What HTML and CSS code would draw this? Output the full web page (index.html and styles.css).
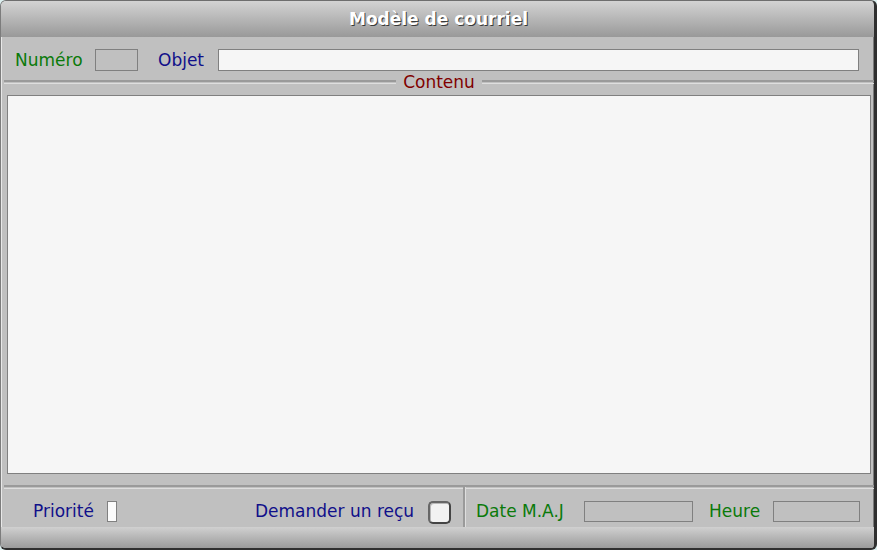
FILE: index.html
```html
<!DOCTYPE html>
<html lang="fr">
<head>
<meta charset="utf-8">
<title>Modèle de courriel</title>
<link rel="stylesheet" href="styles.css">
</head>
<body>
<div class="window">
  <div class="titlebar">Modèle de courriel</div>
  <div class="row-top">
    <span class="label green lbl-numero">Numéro</span>
    <span class="field field-numero"></span>
    <span class="label blue lbl-objet">Objet</span>
    <span class="field field-objet"></span>
  </div>
  <div class="separator">
    <span class="groove"></span>
    <span class="sep-label">Contenu</span>
    <span class="groove"></span>
  </div>
  <div class="content"></div>
  <div class="hgroove"></div>
  <div class="row-bottom">
    <div class="bottom-left">
      <span class="label blue lbl-priorite">Priorité</span>
      <span class="field field-priorite"></span>
      <span class="label blue lbl-recu">Demander un reçu</span>
      <span class="checkbox"></span>
    </div>
    <div class="vdivider"></div>
    <div class="bottom-right">
      <span class="label green lbl-date">Date M.A.J</span>
      <span class="field field-date"></span>
      <span class="label green lbl-heure">Heure</span>
      <span class="field field-heure"></span>
    </div>
  </div>
  <div class="footer"></div>
</div>
</body>
</html>
```
FILE: styles.css
```css
html, body {
  margin: 0;
  padding: 0;
  background: #dcefef;
}
body {
  font-family: "DejaVu Sans", Verdana, sans-serif;
  font-size: 17px;
}
.window {
  width: 877px;
  height: 550px;
  box-sizing: border-box;
  border-style: solid;
  border-color: #6e6e6e #2f2f2f #2f2f2f #7c7c7c;
  border-width: 1px 3px 2px 1px;
  border-radius: 6px;
  background: #c0c0c0;
  overflow: hidden;
  display: flex;
  flex-direction: column;
  box-shadow: inset 1px 0 0 #e8e8e8, inset -1px 0 0 #7a7a7a;
}
.titlebar {
  height: 36px;
  flex: none;
  background: linear-gradient(#d3d3d3, #999999);
  color: #ffffff;
  font-weight: bold;
  font-size: 17px;
  line-height: 36px;
  text-align: center;
  padding-left: 2px;
  text-shadow: 1px 1px 0 #3a3a3a;
}
.label {
  display: block;
  flex: none;
  white-space: nowrap;
}
.green { color: #0a7a0a; }
.blue { color: #10108a; }
.field {
  display: block;
  flex: none;
  box-sizing: border-box;
  border: 1px solid #808080;
}
.row-top {
  height: 38px;
  flex: none;
  display: flex;
  align-items: flex-start;
  padding: 12px 0 0 14px;
  box-sizing: border-box;
}
.row-top .label { line-height: 22px; }
.lbl-numero { width: 80px; }
.field-numero { width: 43px; height: 22px; background: #c0c0c0; }
.lbl-objet { width: 60px; margin-left: 20px; }
.field-objet { width: 641px; height: 22px; background: #f6f6f6; }
.separator {
  height: 14px;
  flex: none;
  display: flex;
  align-items: center;
  margin-left: 3px;
}
.groove {
  flex: 1;
  height: 4px;
  box-sizing: border-box;
  border-top: 2px solid #9a9a9a;
  border-bottom: 1px solid #dedede;
}
.sep-label {
  color: #800000;
  line-height: 14px;
  padding: 0 7px;
}
.content {
  flex: none;
  height: 379px;
  margin: 6px 3px 0 6px;
  box-sizing: border-box;
  border: 1px solid #808080;
  background: #f6f6f6;
}
.hgroove {
  flex: none;
  height: 4px;
  margin: 11px 0 0 3px;
  box-sizing: border-box;
  border-top: 2px solid #9a9a9a;
  border-bottom: 1px solid #dedede;
}
.row-bottom {
  height: 38px;
  flex: none;
  display: flex;
}
.bottom-left, .bottom-right {
  display: flex;
  align-items: flex-start;
  padding-top: 12px;
  box-sizing: border-box;
}
.bottom-left { width: 462px; padding-left: 32px; }
.row-bottom .label { line-height: 21px; }
.lbl-priorite { width: 74px; }
.field-priorite { width: 10px; height: 21px; background: #fbfbfb; }
.lbl-recu { width: 173px; margin-left: 138px; }
.checkbox {
  display: block;
  flex: none;
  width: 23px;
  height: 23px;
  box-sizing: border-box;
  border: 2px solid #444444;
  border-top-color: #666666;
  border-left-color: #666666;
  border-radius: 5px;
  background: #f2f2f2;
  box-shadow: inset 1px 1px 0 #b8b8b8;
}
.vdivider {
  width: 3px;
  flex: none;
  box-sizing: border-box;
  border-left: 2px solid #9a9a9a;
  border-right: 1px solid #dedede;
  margin-top: -2px;
}
.bottom-right { padding-left: 10px; }
.lbl-date { width: 108px; }
.field-date { width: 109px; height: 21px; background: #c0c0c0; }
.lbl-heure { width: 64px; margin-left: 16px; }
.field-heure { width: 87px; height: 21px; background: #c0c0c0; }
.footer {
  flex: 1;
  background: linear-gradient(#d0d0d0, #9b9b9b);
}
```
